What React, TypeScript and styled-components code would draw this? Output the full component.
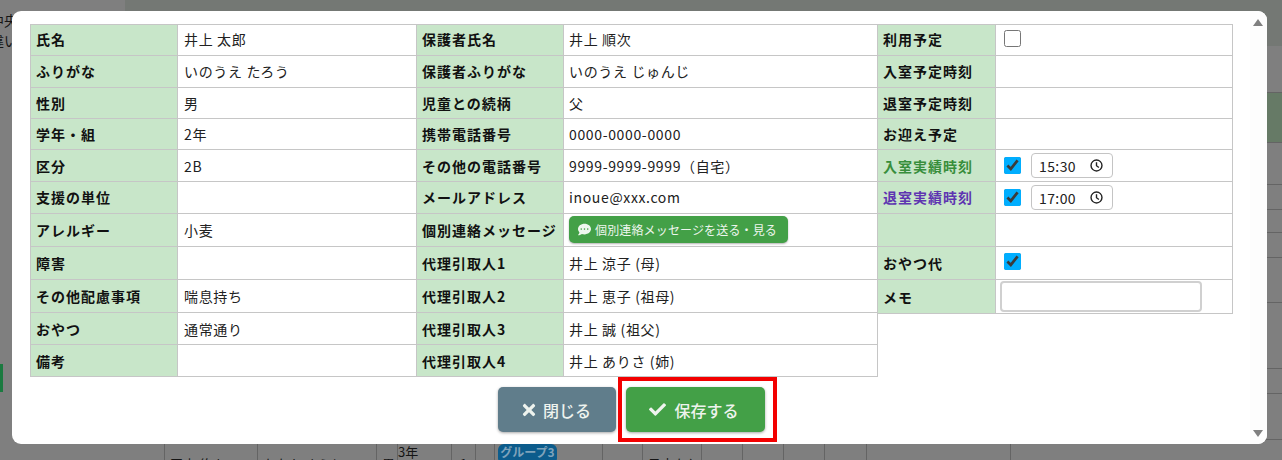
import React from 'react'
import styled, { createGlobalStyle } from 'styled-components'
import { FaCheck, FaCommentDots, FaTimes } from 'react-icons/fa'

const FONT = `'Noto Sans CJK JP', 'Noto Sans', sans-serif`
const LINE = '#c6c6c6'
const LABEL_BG = '#c8e6c9'
const BACK_LINE = '#646464'

const GlobalStyle = createGlobalStyle`
  html, body {
    margin: 0;
    padding: 0;
    background: #7f7f7f;
    overflow: hidden;
  }
  * {
    box-sizing: border-box;
  }
`

const Page = styled.div`
  position: relative;
  display: flex;
  width: 1282px;
  height: 460px;
  overflow: hidden;
  background: #7f7f7f;
  font-family: ${FONT};
`

const LeftRail = styled.div`
  width: 125px;
  flex: none;
  padding-top: 10px;
  font-size: 14px;
  color: #151515;
`

const RailLine = styled.div`
  height: 20px;
  line-height: 20px;
  margin-left: -10px;
  white-space: nowrap;
`

const RailMark = styled.div`
  width: 3px;
  height: 28px;
  margin-top: 314px;
  background: #1b7a40;
`

const BackArea = styled.div`
  flex: 1;
  display: flex;
  flex-direction: column;
`

const BackRow = styled.div<{ $h: number; $bg?: string; $line?: boolean }>`
  height: ${(p) => p.$h}px;
  flex: none;
  background: ${(p) => p.$bg || 'transparent'};
  border-bottom: ${(p) => (p.$line ? `1px solid ${BACK_LINE}` : 'none')};
`

const BackCells = styled.div`
  display: grid;
  grid-template-columns: 39px 93px 119px 21px 54px 24px 19px 108px 40px 59px 41px 41px 41px 42px 144px 1fr;
  height: 20px;
`

const BackCell = styled.div`
  border-left: 1px solid ${BACK_LINE};
  padding: 15px 0 0 5px;
  font-size: 13px;
  line-height: 18px;
  color: #151515;
  white-space: nowrap;
  overflow: hidden;
`

const BackSpacer = styled.div``

const BackGrade = styled(BackCell)`
  padding: 3px 0 0 0;
`

const BackCount = styled(BackCell)`
  padding-left: 8px;
`

const BackBadgeCell = styled(BackCell)`
  padding: 4px 0 0 3px;
`

const BackBadge = styled.span`
  display: block;
  width: 59px;
  height: 20px;
  border-radius: 6px;
  background: #0c5c8c;
  color: #7fa3bb;
  font-size: 12px;
  font-weight: 700;
  line-height: 16px;
  text-align: center;
`

const Modal = styled.div`
  position: absolute;
  top: 11px;
  left: 12px;
  width: 1255px;
  height: 433px;
  display: flex;
  background: #fff;
  border-radius: 9px;
  overflow: hidden;
`

const Content = styled.div`
  flex: 1;
  padding: 13px 0 0 18px;
`

const Tables = styled.div`
  display: flex;
  align-items: flex-start;
`

const Table = styled.table<{ $w: number; $overlap?: boolean }>`
  width: ${(p) => p.$w}px;
  margin-left: ${(p) => (p.$overlap ? '-1px' : '0')};
  table-layout: fixed;
  border-collapse: collapse;
  flex: none;
  font-size: 14px;
  color: #212121;
`

const Row = styled.tr<{ $h: number }>`
  height: ${(p) => p.$h}px;
`

const Label = styled.th<{ $color?: string; $lift?: boolean }>`
  padding: 0 0 ${(p) => (p.$lift ? '2px' : '0')} 5px;
  border: 1px solid ${LINE};
  background: ${LABEL_BG};
  color: ${(p) => p.$color || '#111'};
  font-weight: 700;
  font-size: 14px;
  letter-spacing: 1px;
  text-align: left;
  white-space: nowrap;
  vertical-align: middle;
`

const Value = styled.td<{ $lift?: boolean }>`
  padding: 0 0 ${(p) => (p.$lift ? '2px' : '0')} 6px;
  border: 1px solid ${LINE};
  letter-spacing: 0.65px;
  white-space: nowrap;
  vertical-align: middle;
`

const ContactValue = styled(Value)`
  padding-left: 5px;
`

const ControlValue = styled(Value)`
  padding-left: 8px;
`

const MemoValue = styled(Value)`
  padding-left: 4px;
`

const Controls = styled.div`
  display: flex;
  align-items: center;
  gap: 10px;
`

const Check = styled.input.attrs({ type: 'checkbox', readOnly: true })`
  display: block;
  width: 17px;
  height: 17px;
  margin: 0;
  accent-color: #00aeff;
`

const LoneCheck = styled(Check)`
  margin-top: -3px;
`

const TimeBox = styled.div`
  width: 82px;
  height: 25px;
  display: flex;
  align-items: center;
  justify-content: space-between;
  padding: 0 9px 0 7px;
  border: 1px solid #c4c4c4;
  border-radius: 4px;
  font-size: 14px;
  letter-spacing: 0.4px;
`

const MemoInput = styled.input`
  display: block;
  width: 202px;
  height: 31px;
  margin-top: -1px;
  border: 2px solid #d0d0d0;
  border-radius: 4px;
  background: #fff;
`

const MessageButton = styled.button`
  display: flex;
  align-items: center;
  gap: 4px;
  width: 219px;
  height: 27px;
  margin-top: -1px;
  padding: 0 0 0 9px;
  border: none;
  border-radius: 5px;
  background: #43a047;
  color: #eef6ee;
  font-family: ${FONT};
  font-size: 12px;
  letter-spacing: 0.15px;
  box-shadow: 0 1px 2px rgba(0, 0, 0, 0.3);
  svg {
    font-size: 13px;
    flex: none;
  }
`

const ButtonRow = styled.div`
  display: flex;
  justify-content: center;
  gap: 10px;
  margin-top: 10px;
  padding-right: 18px;
`

const ActionWrap = styled.div`
  position: relative;
`

const ActionButton = styled.button<{ $bg: string; $w: number; $icon: number; $gap: number }>`
  display: flex;
  align-items: center;
  justify-content: center;
  gap: ${(p) => p.$gap}px;
  width: ${(p) => p.$w}px;
  height: 45px;
  padding: 0 2px 0 0;
  border: none;
  border-radius: 5px;
  background: ${(p) => p.$bg};
  color: #eef3ee;
  font-family: ${FONT};
  font-size: 16px;
  font-weight: 500;
  box-shadow: 0 1px 3px rgba(0, 0, 0, 0.35);
  svg {
    font-size: ${(p) => p.$icon}px;
    flex: none;
  }
`

const RedFrame = styled.div`
  position: absolute;
  inset: -10px -12px -10px -8px;
  border: 4px solid #f30000;
  pointer-events: none;
`

const ScrollTrack = styled.div`
  width: 17px;
  flex: none;
  display: flex;
  flex-direction: column;
  justify-content: space-between;
  align-items: center;
  padding: 8px 2px 7px 0;
  background: #fdfdfd;
`

const Arrow = styled.div<{ $down?: boolean }>`
  width: 0;
  height: 0;
  border-left: 5px solid transparent;
  border-right: 5px solid transparent;
  border-top: ${(p) => (p.$down ? '7px solid #808080' : 'none')};
  border-bottom: ${(p) => (p.$down ? 'none' : '7px solid #808080')};
`

const ClockIcon = () => (
  <svg width="13" height="13" viewBox="0 0 14 14" fill="none" stroke="#222" strokeWidth="1.5">
    <circle cx="7" cy="7" r="5.9" />
    <path d="M7 3.4V7.2L9.6 9.2" />
  </svg>
)

const leftRows = [
  { h: 31, lift: true, a: '氏名', b: '井上 太郎', c: '保護者氏名', d: '井上 順次' },
  { h: 32, lift: true, a: 'ふりがな', b: 'いのうえ たろう', c: '保護者ふりがな', d: 'いのうえ じゅんじ' },
  { h: 31, a: '性別', b: '男', c: '児童との続柄', d: '父' },
  { h: 31, a: '学年・組', b: '2年', c: '携帯電話番号', d: '0000-0000-0000' },
  { h: 32, a: '区分', b: '2B', c: 'その他の電話番号', d: '9999-9999-9999（自宅）' },
  { h: 32, lift: true, a: '支援の単位', b: '', c: 'メールアドレス', d: 'inoue@xxx.com' },
  { h: 33, a: 'アレルギー', b: '小麦', c: '個別連絡メッセージ', d: null },
  { h: 33, a: '障害', b: '', c: '代理引取人1', d: '井上 涼子 (母)' },
  { h: 33, a: 'その他配慮事項', b: '喘息持ち', c: '代理引取人2', d: '井上 恵子 (祖母)' },
  { h: 32, a: 'おやつ', b: '通常通り', c: '代理引取人3', d: '井上 誠 (祖父)' },
  { h: 32, a: '備考', b: '', c: '代理引取人4', d: '井上 ありさ (姉)' },
]

const backRows = [
  { h: 46, bg: '#747874' },
  { h: 47, line: true },
  { h: 50, bg: '#667a66', line: true },
  { h: 42, line: true },
  { h: 25, line: true },
  { h: 23, line: true },
  { h: 25, line: true },
  { h: 45, line: true },
  { h: 66, line: true },
  { h: 25, line: true },
  { h: 46, line: true },
]

const App = () => (
  <Page>
    <GlobalStyle />
    <LeftRail>
      <RailLine>中央</RailLine>
      <RailLine>違い</RailLine>
      <RailMark />
    </LeftRail>
    <BackArea>
      {backRows.map((row, i) => (
        <BackRow key={i} $h={row.h} $bg={row.bg} $line={row.line} />
      ))}
      <BackCells>
        <BackSpacer />
        <BackCell>田中 悠人</BackCell>
        <BackCell>たなか ゆうと</BackCell>
        <BackCell>男</BackCell>
        <BackGrade>3年</BackGrade>
        <BackCount>1</BackCount>
        <BackCell />
        <BackBadgeCell>
          <BackBadge>グループ3</BackBadge>
        </BackBadgeCell>
        <BackCell />
        <BackCell>予定なし</BackCell>
        <BackCell />
        <BackCell />
        <BackCell />
        <BackCell />
        <BackCell />
        <BackCell />
      </BackCells>
    </BackArea>
    <Modal>
      <Content>
        <Tables>
          <Table $w={848}>
            <colgroup>
              <col width="147" />
              <col width="239" />
              <col width="147" />
              <col width="314" />
            </colgroup>
            <tbody>
              {leftRows.map((row) => (
                <Row key={row.a} $h={row.h}>
                  <Label $lift={row.lift}>{row.a}</Label>
                  <Value $lift={row.lift}>{row.b}</Value>
                  <Label $lift={row.lift}>{row.c}</Label>
                  <ContactValue $lift={row.lift}>
                    {row.d ?? (
                      <MessageButton>
                        <FaCommentDots />
                        個別連絡メッセージを送る・見る
                      </MessageButton>
                    )}
                  </ContactValue>
                </Row>
              ))}
            </tbody>
          </Table>
          <Table $w={356} $overlap>
            <colgroup>
              <col width="118" />
              <col width="237" />
            </colgroup>
            <tbody>
              <Row $h={31}>
                <Label $lift>利用予定</Label>
                <ControlValue>
                  <LoneCheck />
                </ControlValue>
              </Row>
              <Row $h={32}>
                <Label $lift>入室予定時刻</Label>
                <Value />
              </Row>
              <Row $h={31}>
                <Label>退室予定時刻</Label>
                <Value />
              </Row>
              <Row $h={31}>
                <Label>お迎え予定</Label>
                <Value />
              </Row>
              <Row $h={32}>
                <Label $color="#388e3c">入室実績時刻</Label>
                <ControlValue>
                  <Controls>
                    <Check defaultChecked />
                    <TimeBox>
                      15:30
                      <ClockIcon />
                    </TimeBox>
                  </Controls>
                </ControlValue>
              </Row>
              <Row $h={32}>
                <Label $color="#5e35b1" $lift>退室実績時刻</Label>
                <ControlValue>
                  <Controls>
                    <Check defaultChecked />
                    <TimeBox>
                      17:00
                      <ClockIcon />
                    </TimeBox>
                  </Controls>
                </ControlValue>
              </Row>
              <Row $h={33}>
                <Label />
                <Value />
              </Row>
              <Row $h={33}>
                <Label>おやつ代</Label>
                <ControlValue>
                  <LoneCheck defaultChecked />
                </ControlValue>
              </Row>
              <Row $h={34}>
                <Label>メモ</Label>
                <MemoValue>
                  <MemoInput />
                </MemoValue>
              </Row>
            </tbody>
          </Table>
        </Tables>
        <ButtonRow>
          <ActionButton $bg="#607d8b" $w={118} $icon={18} $gap={5}>
            <FaTimes />
            閉じる
          </ActionButton>
          <ActionWrap>
            <ActionButton $bg="#43a047" $w={139} $icon={17} $gap={8}>
              <FaCheck />
              保存する
            </ActionButton>
            <RedFrame />
          </ActionWrap>
        </ButtonRow>
      </Content>
      <ScrollTrack>
        <Arrow />
        <Arrow $down />
      </ScrollTrack>
    </Modal>
  </Page>
)

export default App
